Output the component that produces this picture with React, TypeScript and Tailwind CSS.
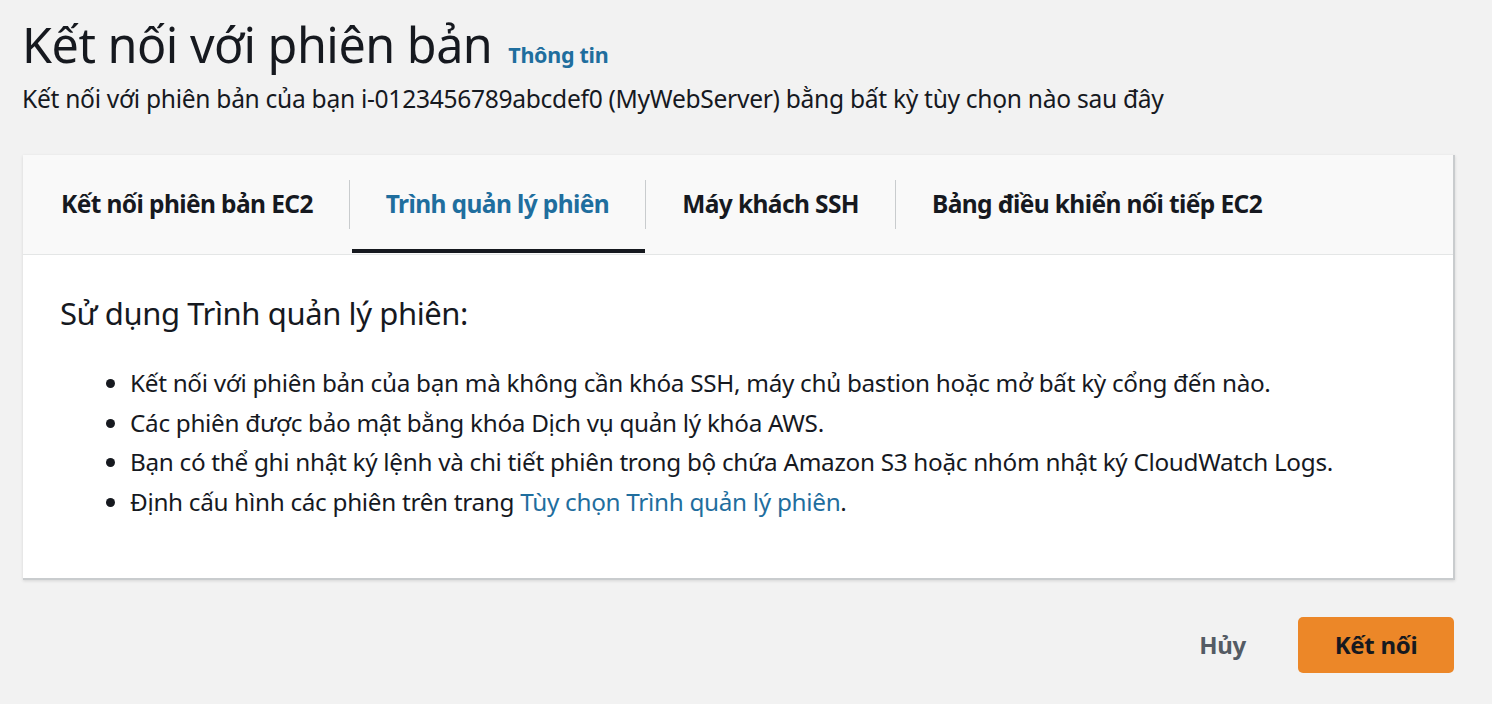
import React from "react";

const font = { fontFamily: '"Noto Sans", "Open Sans", sans-serif' };

export default function App() {
  const tabs = ["Kết nối phiên bản EC2", "Trình quản lý phiên", "Máy khách SSH", "Bảng điều khiển nối tiếp EC2"];
  return (
    <div className="w-[1492px] h-[704px] bg-[#f2f2f2] text-[#16191f] overflow-hidden" style={font}>
      <div className="pt-[14px] pl-[22px]">
        <div className="flex items-baseline gap-[16px]">
          <h1 className="text-[48.5px] leading-[60px] font-normal tracking-[-0.5px]">Kết nối với phiên bản</h1>
          <a className="text-[21.5px] font-bold text-[#1f6e9e] tracking-[-0.3px]">Thông tin</a>
        </div>
        <p className="mt-[10px] text-[24.6px] leading-[30px] tracking-[-0.3px]">
          Kết nối với phiên bản của bạn i-0123456789abcdef0 (MyWebServer) bằng bất kỳ tùy chọn nào sau đây
        </p>
      </div>
      <div className="ml-[23px] mt-[41px] w-[1432px] h-[425px] bg-white border-r-2 border-b-2 border-[#c9ccce] shadow-[0_1px_3px_rgba(0,0,0,0.12)] flex flex-col">
        <div className="h-[100px] bg-[#f9f9f9] border-b border-[#e4e6e6] flex items-stretch pl-[14px]">
          {tabs.map((t, i) => (
            <div key={t} className="flex items-stretch">
              {i > 0 && <div className="w-px bg-[#c9ccce] my-[25px]" />}
              <div className={`relative flex items-center px-[36px] ${i === 0 ? "pl-[24px] pr-[36px]" : ""}`}>
                <span className={`text-[24.5px] font-bold tracking-[-0.6px] ${i === 1 ? "text-[#1f6e9e]" : "text-[#16191f]"}`}>{t}</span>
                {i === 1 && <div className="absolute left-[2px] right-0 bottom-[1px] h-[4px] bg-[#16191f]" />}
              </div>
            </div>
          ))}
        </div>
        <div className="pl-[37px] pt-[38px]">
          <h2 className="text-[31px] leading-[40px] font-normal tracking-[-0.4px]">Sử dụng Trình quản lý phiên:</h2>
          <ul className="mt-[30px] pl-[70px] list-disc text-[24.3px] leading-[39.5px] tracking-[-0.3px] marker:text-[#16191f]">
            <li>Kết nối với phiên bản của bạn mà không cần khóa SSH, máy chủ bastion hoặc mở bất kỳ cổng đến nào.</li>
            <li>Các phiên được bảo mật bằng khóa Dịch vụ quản lý khóa AWS.</li>
            <li>Bạn có thể ghi nhật ký lệnh và chi tiết phiên trong bộ chứa Amazon S3 hoặc nhóm nhật ký CloudWatch Logs.</li>
            <li>Định cấu hình các phiên trên trang <a className="text-[#1f6e9e]">Tùy chọn Trình quản lý phiên</a>.</li>
          </ul>
        </div>
      </div>
      <div className="flex justify-end items-center gap-[52px] pr-[38px] mt-[37px]">
        <button className="text-[24px] font-bold text-[#545b64] tracking-[-0.3px]">Hủy</button>
        <button className="w-[156px] h-[56px] rounded-[5px] bg-[#ec8728] text-[24px] font-bold text-[#16191f] tracking-[-0.3px]">Kết nối</button>
      </div>
    </div>
  );
}
